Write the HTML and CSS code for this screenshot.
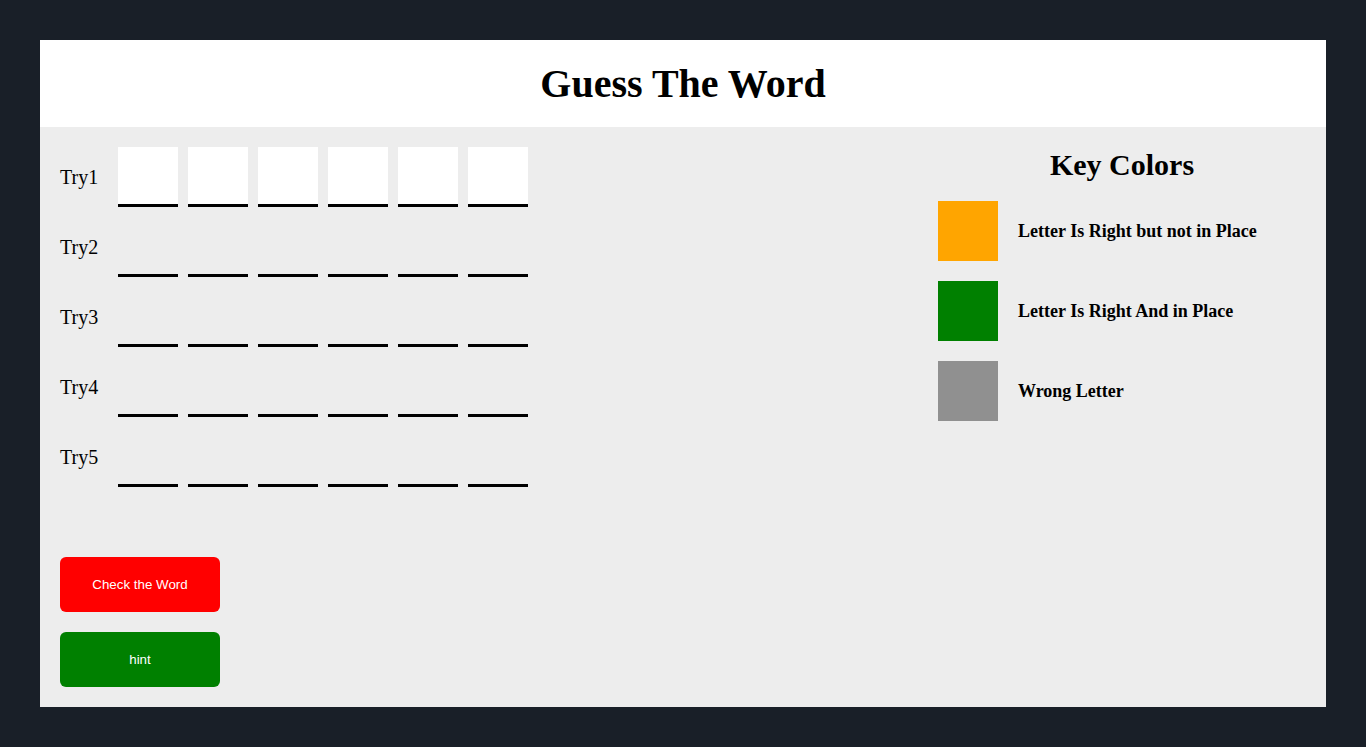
FILE: index.html
```html
<!DOCTYPE html>
<html lang="en">
<head>
<meta charset="utf-8">
<title>Guess The Word</title>
<link rel="stylesheet" href="styles.css">
</head>
<body>
<div class="app">
  <header class="header">
    <h1 class="title">Guess The Word</h1>
  </header>
  <main class="main">
    <section class="game">
      <div class="tries">
        <div class="try">
          <span class="try-label">Try1</span>
          <div class="letters">
            <input class="letter active" maxlength="1"><input class="letter active" maxlength="1"><input class="letter active" maxlength="1"><input class="letter active" maxlength="1"><input class="letter active" maxlength="1"><input class="letter active" maxlength="1">
          </div>
        </div>
        <div class="try">
          <span class="try-label">Try2</span>
          <div class="letters">
            <input class="letter" disabled><input class="letter" disabled><input class="letter" disabled><input class="letter" disabled><input class="letter" disabled><input class="letter" disabled>
          </div>
        </div>
        <div class="try">
          <span class="try-label">Try3</span>
          <div class="letters">
            <input class="letter" disabled><input class="letter" disabled><input class="letter" disabled><input class="letter" disabled><input class="letter" disabled><input class="letter" disabled>
          </div>
        </div>
        <div class="try">
          <span class="try-label">Try4</span>
          <div class="letters">
            <input class="letter" disabled><input class="letter" disabled><input class="letter" disabled><input class="letter" disabled><input class="letter" disabled><input class="letter" disabled>
          </div>
        </div>
        <div class="try">
          <span class="try-label">Try5</span>
          <div class="letters">
            <input class="letter" disabled><input class="letter" disabled><input class="letter" disabled><input class="letter" disabled><input class="letter" disabled><input class="letter" disabled>
          </div>
        </div>
      </div>
      <div class="actions">
        <button class="btn btn-check">Check the Word</button>
        <button class="btn btn-hint">hint</button>
      </div>
    </section>
    <aside class="key">
      <h2 class="key-title">Key Colors</h2>
      <div class="key-item">
        <span class="swatch swatch-orange"></span>
        <span class="key-text">Letter Is Right but not in Place</span>
      </div>
      <div class="key-item">
        <span class="swatch swatch-green"></span>
        <span class="key-text">Letter Is Right And in Place</span>
      </div>
      <div class="key-item">
        <span class="swatch swatch-gray"></span>
        <span class="key-text">Wrong Letter</span>
      </div>
    </aside>
  </main>
</div>
</body>
</html>
```
FILE: styles.css
```css
* { box-sizing: border-box; }
html, body { margin: 0; }
body {
  background: #191f28;
  padding: 40px;
  font-family: "Liberation Serif", "Times New Roman", serif;
  color: #000;
}
.app {
  background: #ededed;
}
.header {
  background: #fff;
  height: 87px;
  display: flex;
  align-items: center;
  justify-content: center;
}
.title {
  margin: 0;
  font-size: 40px;
  line-height: 46px;
  font-weight: bold;
}
.main {
  display: flex;
  justify-content: space-between;
  padding: 20px;
}
.game {
  display: flex;
  flex-direction: column;
}
.tries {
  display: flex;
  flex-direction: column;
  gap: 10px;
}
.try {
  display: flex;
  align-items: center;
}
.try-label {
  width: 58px;
  font-size: 20px;
}
.letters {
  display: flex;
  gap: 10px;
}
.letter {
  width: 60px;
  height: 60px;
  margin: 0;
  padding: 0;
  border: none;
  border-bottom: 3px solid #000;
  background: transparent;
  outline: none;
  font-family: inherit;
  font-size: 30px;
  text-align: center;
}
.letter.active {
  background: #fff;
}
.actions {
  display: flex;
  flex-direction: column;
  gap: 20px;
  margin-top: 70px;
}
.btn {
  width: 160px;
  height: 55px;
  border: none;
  border-radius: 6px;
  color: #fff;
  font-family: "Liberation Sans", Arial, sans-serif;
  font-size: 13.333px;
  cursor: pointer;
}
.btn-check { background: #ff0000; }
.btn-hint { background: #008000; }
.key {
  width: 368px;
}
.key-title {
  margin: 0 0 18px;
  text-align: center;
  font-size: 30px;
  line-height: 36px;
}
.key-item {
  display: flex;
  align-items: center;
  gap: 20px;
  margin-bottom: 20px;
}
.swatch {
  width: 60px;
  height: 60px;
  flex: none;
}
.swatch-orange { background: #ffa500; }
.swatch-green { background: #008000; }
.swatch-gray { background: #909090; }
.key-text {
  font-size: 18px;
  font-weight: bold;
}
```
